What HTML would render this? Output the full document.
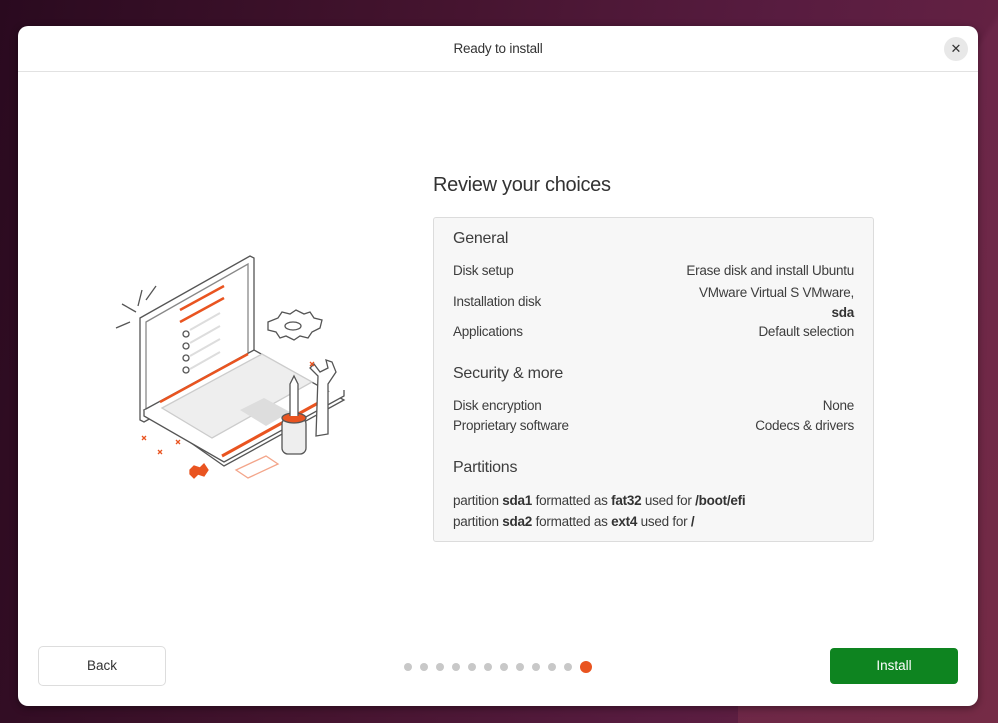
<!DOCTYPE html>
<html><head><meta charset="utf-8"><style>
*{margin:0;padding:0;box-sizing:border-box}
body{width:998px;height:723px;overflow:hidden;font-family:"Liberation Sans",sans-serif;color:#333;
background:linear-gradient(100deg,#2a0a1f 0%,#45142f 40%,#581c40 70%,#6a2444 100%);position:relative}
.bg2{position:absolute;right:0;top:0;width:260px;height:723px;background:linear-gradient(125deg,transparent 0%,transparent 35%,rgba(110,40,75,.7) 36%,rgba(120,45,70,.8) 100%)}
.dlg{position:absolute;left:18px;top:26px;width:960px;height:680px;background:#fff;border-radius:10px;box-shadow:0 2px 8px rgba(0,0,0,.4)}
.hdr{height:46px;border-bottom:1px solid #e2e2e2;text-align:center;line-height:46px;font-size:13.5px;color:#333;letter-spacing:-.2px}
.x{position:absolute;right:10px;top:11px;width:24px;height:24px;border-radius:50%;background:#e8e8e8;text-align:center;line-height:24px;font-size:13px;color:#333}
h1{position:absolute;left:415px;top:148px;font-size:20px;font-weight:normal;color:#333;letter-spacing:-.3px}
.panel{position:absolute;left:415px;top:191px;width:441px;height:325px;background:#f7f7f7;border:1px solid #dcdcdc;border-radius:3px;font-size:13.5px;color:#3d3d3d;letter-spacing:-.25px}
.t{position:absolute;left:19px}
.r{position:absolute;right:19px;text-align:right}
.h{font-size:16px}
b{color:#333}
.back{position:absolute;left:20px;top:620px;width:128px;height:40px;border:1px solid #ddd;border-radius:5px;text-align:center;line-height:38px;font-size:13.5px}
.inst{position:absolute;left:812px;top:622px;width:128px;height:36px;background:#0e8420;border-radius:4px;color:#fff;text-align:center;line-height:36px;font-size:13.5px}
.dots{position:absolute;left:386px;top:635px;display:flex;gap:8px;align-items:center}
.dots i{width:8px;height:8px;border-radius:50%;background:#c8c8c8;display:block}
.dots i.a{width:12px;height:12px;background:#e95420}
</style></head><body><div class="bg2"></div>
<div class="dlg">
<div class="hdr">Ready to install</div><div class="x">✕</div>
<svg style="position:absolute;left:82px;top:214px" width="260" height="250" viewBox="100 240 260 250" fill="none" stroke="#555" stroke-width="1.3">
<path d="M116 328l14-6M122 304l14 8M138 306l4-16M146 300l10-14"/>
<path d="M140 318l110-62 4 2v102l-110 62-4-2z" fill="#fff"/>
<path d="M146 322l102-58v92l-102 58z" fill="#fff" stroke="#888"/>
<path d="M180 310l44-24M180 322l44-24" stroke="#e95420" stroke-width="2.5"/>
<path d="M190 330l30-17M190 343l30-17M190 356l30-17M190 369l30-17" stroke="#ddd" stroke-width="2"/>
<circle cx="186" cy="334" r="3"/><circle cx="186" cy="346" r="3"/><circle cx="186" cy="358" r="3"/><circle cx="186" cy="370" r="3"/>
<path d="M144 410l110-60 90 50-120 66z" fill="#fff"/>
<path d="M144 410v6l80 46 120-66v-6" fill="#fff"/>
<path d="M222 456l98-54" stroke="#e95420" stroke-width="3"/>
<path d="M162 408l100-54 50 28-100 56z" fill="#eee" stroke="#ccc"/>
<path d="M160 402l88-48" stroke="#e95420" stroke-width="2.5"/>
<path d="M240 410l24-12 26 14-24 14z" fill="#ddd" stroke="none"/>
<path d="M268 322l10-4 4-6 8 2 6-4 8 4 6-2 4 6 8 2-2 8-8 4-4 6-8-2-6 4-8-4-6 2-4-6-8-2z" fill="#fff"/>
<ellipse cx="293" cy="326" rx="8" ry="4"/>
<rect x="282" y="418" width="24" height="36" rx="6" fill="#eee"/><ellipse cx="294" cy="418" rx="12" ry="5" fill="#e95420"/>
<path d="M290 416v-32l4-8 4 8v32" fill="#fff"/>
<path d="M316 436l2-60-8-8 4-4 6 8 8-4-2-8 6 2 4 10-8 12 0 50z" fill="#fff"/>
<path d="M190 470l4-4 6 2 4-4 4 6-4 6-6-2-4 4-4-4z" fill="#e95420" stroke="#e95420"/>
<path d="M236 470l30-14 12 8-30 14z" stroke="#f3a58a"/>
<path d="M142 436l4 4M146 436l-4 4M158 450l4 4M162 450l-4 4M176 440l4 4M180 440l-4 4M310 362l4 4M314 362l-4 4" stroke="#e95420"/>
</svg>
<h1>Review your choices</h1>
<div class="panel">
<div class="t h" style="top:12px">General</div>
<div class="t" style="top:45px">Disk setup</div><div class="r" style="top:45px">Erase disk and install Ubuntu</div>
<div class="t" style="top:76px">Installation disk</div><div class="r" style="top:65px;line-height:20px">VMware Virtual S VMware,<br><b>sda</b></div>
<div class="t" style="top:106px">Applications</div><div class="r" style="top:106px">Default selection</div>
<div class="t h" style="top:147px">Security &amp; more</div>
<div class="t" style="top:180px">Disk encryption</div><div class="r" style="top:180px">None</div>
<div class="t" style="top:200px">Proprietary software</div><div class="r" style="top:200px">Codecs &amp; drivers</div>
<div class="t h" style="top:241px">Partitions</div>
<div class="t" style="top:275px">partition <b>sda1</b> formatted as <b>fat32</b> used for <b>/boot/efi</b></div>
<div class="t" style="top:296px">partition <b>sda2</b> formatted as <b>ext4</b> used for <b>/</b></div>
</div>
<div class="back">Back</div>
<div class="dots"><i></i><i></i><i></i><i></i><i></i><i></i><i></i><i></i><i></i><i></i><i></i><i class="a"></i></div>
<div class="inst">Install</div>
</div>
</body></html>
